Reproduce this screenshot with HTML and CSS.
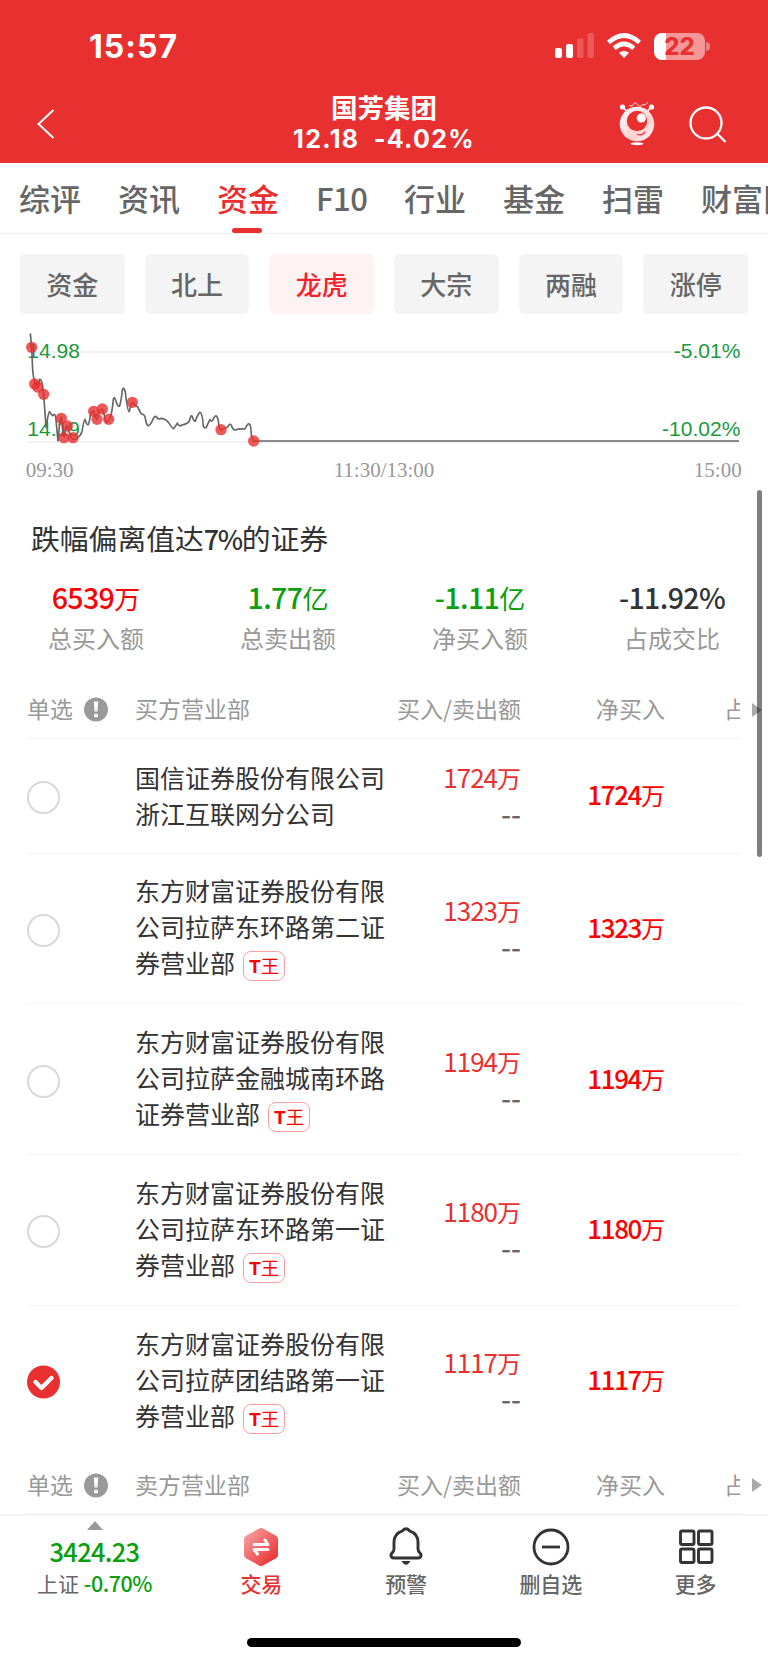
FILE: index.html
```html
<!DOCTYPE html>
<html lang="zh-CN">
<head>
    <meta charset="UTF-8">
    <meta name="viewport" content="width=device-width, initial-scale=1.0">
    <title>国芳集团</title>
    <link rel="stylesheet" href="styles.css">
</head>
<body>
    <header class="header">
        <div class="status-bar">
            <span class="clock">15:57</span>
            <div class="status-icons">
                <svg class="signal" width="40" height="26" viewBox="0 0 40 26" fill="#fff">
                    <rect x="0" y="15" width="7" height="10" rx="2"/>
                    <rect x="11" y="11" width="7" height="14" rx="2"/>
                    <rect x="22" y="5.500" width="6.500" height="19.500" rx="2" opacity=".2"/>
                    <rect x="32.500" y="0" width="6.500" height="25" rx="2" opacity=".2"/>
                </svg>
                <svg class="wifi" width="34" height="26" viewBox="0 0 34 26" fill="none" stroke="#fff" stroke-width="4.600">
                    <path d="M1.500 9.500Q17-4.500 32.500 9.500"/>
                    <path d="M7.200 15.300Q17 6.600 26.800 15.300"/>
                    <path d="M17 25l-5-5.200q5-3.800 10 0z" fill="#fff" stroke="none"/>
                </svg>
                <div class="battery">22</div>
            </div>
        </div>
        <div class="title-bar">
            <svg class="back" width="18" height="30" viewBox="0 0 18 30" fill="none" stroke="#fff" stroke-width="2"><path d="M16.500 1L1.500 15l15 14"/></svg>
            <div class="stock">
                <div class="stock-name">国芳集团</div>
                <div class="stock-price">12.18&nbsp; -4.02%</div>
            </div>
            <svg class="robot" width="36" height="44" viewBox="0 0 36 44">
                <defs>
                    <linearGradient id="ball" x1="0" y1="0" x2="1" y2="1">
                        <stop offset="0" stop-color="#fff"/><stop offset=".65" stop-color="#ffd0d0"/><stop offset="1" stop-color="#fff"/>
                    </linearGradient>
                </defs>
                <path d="M4 5l4 5M32 5l-4 5" stroke="#fff" stroke-width="1.500"/>
                <circle cx="3.500" cy="5" r="2.600" fill="#fff"/>
                <circle cx="32.500" cy="5" r="2.600" fill="#fff"/>
                <path d="M10 3.500l3 .5 3-3.500 5 4 3-2 2 .500 3-3" fill="none" stroke="#ffd0d0" stroke-width="1"/>
                <circle cx="18" cy="22" r="17.300" fill="url(#ball)"/>
                <circle cx="18" cy="19" r="10.200" fill="#e93030"/>
                <circle cx="22.300" cy="16" r="4.600" fill="#fff"/>
                <path d="M18 32.500q6 1.500 8-3" fill="none" stroke="#e93030" stroke-width="1.200"/>
                <ellipse cx="18" cy="41.800" rx="6.500" ry="1.500" fill="#fff"/>
            </svg>
            <svg class="search" width="38" height="38" viewBox="0 0 38 38" fill="none" stroke="#fff" stroke-width="2.300"><circle cx="17" cy="17" r="15.500"/><path d="M28 27.500l8.500 8.500"/></svg>
        </div>
    </header>

    <nav class="tabs">
        <span class="tab">综评</span>
        <span class="tab">资讯</span>
        <span class="tab active">资金</span>
        <span class="tab latin">F10</span>
        <span class="tab">行业</span>
        <span class="tab">基金</span>
        <span class="tab">扫雷</span>
        <span class="tab">财富队</span>
    </nav>

    <div class="chips">
        <span class="chip">资金</span>
        <span class="chip">北上</span>
        <span class="chip active">龙虎</span>
        <span class="chip">大宗</span>
        <span class="chip">两融</span>
        <span class="chip">涨停</span>
    </div>

    <!-- intraday price line, 3 units per pixel -->
    <svg class="chart" width="768" height="160" viewBox="0 270 2304 480">
        <path d="M82 336H2220M82 606H2220" stroke="#eee" stroke-width="5"/>
        <g class="chart-value">
            <text x="82" y="354">14.98</text>
            <text x="82" y="588">14.19</text>
            <text x="2221" y="354" text-anchor="end">-5.01%</text>
            <text x="2221" y="588" text-anchor="end">-10.02%</text>
        </g>
        <path class="chart-line" d="M91 280L95 322L98 390Q101 425 108 432Q115 440 118 420Q121 413 126 428L131 463L138 561Q139 568 142 540Q146 515 149 515Q154 526 158 527Q164 518 167 530L174 604L180 540L184 533L192 592Q197 556 202 558Q208 580 214 594Q222 602 230 594Q242 588 246 575Q252 538 255 538Q260 555 264 555Q268 550 271 525Q276 512 281 514Q287 538 291 538Q298 508 307 507Q315 530 317 544Q322 550 330 535Q336 520 340 478Q343 466 348 484Q353 502 359 498Q364 480 367 450Q371 438 376 456Q382 514 388 515Q393 488 398 487Q406 498 414 502Q420 516 424 522Q434 522 436 535Q440 558 445 557Q454 553 460 535Q466 525 470 532Q476 540 482 535Q497 535 506 548Q517 566 521 566L532 550Q538 562 546 555Q562 552 568 543Q572 524 576 528Q582 546 586 543Q595 520 600 517Q607 520 610 558Q613 567 619 562Q626 545 630 539Q637 548 641 535Q647 524 651 530Q656 539 656 552Q659 575 665 568Q678 565 684 560Q690 548 694 556Q699 571 706 570Q715 566 735 567Q742 550 748 552Q753 555 754 585L761 603H2217"/>
        <g class="chart-dots">
            <circle cx="95" cy="322" r="17"/><circle cx="104" cy="432" r="17"/>
            <circle cx="113" cy="441" r="17"/><circle cx="131" cy="463" r="17"/>
            <circle cx="184" cy="535" r="17"/><circle cx="202" cy="558" r="17"/>
            <circle cx="192" cy="593" r="17"/><circle cx="219" cy="593" r="17"/>
            <circle cx="281" cy="514" r="17"/><circle cx="291" cy="538" r="17"/>
            <circle cx="307" cy="507" r="17"/><circle cx="326" cy="538" r="17"/>
            <circle cx="397" cy="487" r="17"/><circle cx="663" cy="569" r="17"/>
            <circle cx="761" cy="603" r="17"/>
        </g>
        <g class="chart-time">
            <text x="77" y="711">09:30</text>
            <text x="1152" y="711" text-anchor="middle">11:30/13:00</text>
            <text x="2225" y="711" text-anchor="end">15:00</text>
        </g>
    </svg>

    <main class="content">
        <h2 class="reason">跌幅偏离值达<span class="num">7%</span>的证券</h2>

        <div class="stats">
            <div class="stat">
                <div class="stat-value red"><span class="num">6539</span>万</div>
                <div class="stat-label">总买入额</div>
            </div>
            <div class="stat">
                <div class="stat-value green"><span class="num">1.77</span>亿</div>
                <div class="stat-label">总卖出额</div>
            </div>
            <div class="stat">
                <div class="stat-value green"><span class="num">-1.11</span>亿</div>
                <div class="stat-label">净买入额</div>
            </div>
            <div class="stat">
                <div class="stat-value"><span class="num">-11.92%</span></div>
                <div class="stat-label">占成交比</div>
            </div>
        </div>

        <div class="row row-head">
            <div class="pick">单选
                <svg width="24" height="25" viewBox="0 0 24 25"><circle cx="12" cy="12.500" r="12" fill="#999"/><path d="M9.800 4.500h4.400l-.8 10h-2.800z" fill="#fff"/><circle cx="12" cy="18.500" r="2.100" fill="#fff"/></svg>
            </div>
            <div class="dept">买方营业部</div>
            <div class="amount">买入/卖出额</div>
            <div class="net">净买入</div>
            <div class="ratio">占</div>
            <i class="more-arrow"></i>
        </div>
        <div class="row row-short">
            <div class="pick"><i class="radio"></i></div>
            <div class="dept">国信证券股份有限公司<br>浙江互联网分公司</div>
            <div class="amount"><div><span class="num">1724</span>万</div><div class="none">--</div></div>
            <div class="net"><span class="num">1724</span>万</div>
        </div>
        <div class="row">
            <div class="pick"><i class="radio"></i></div>
            <div class="dept">东方财富证券股份有限<br>公司拉萨东环路第二证<br>券营业部<span class="tag"><b>T</b>王</span></div>
            <div class="amount"><div><span class="num">1323</span>万</div><div class="none">--</div></div>
            <div class="net"><span class="num">1323</span>万</div>
        </div>
        <div class="row">
            <div class="pick"><i class="radio"></i></div>
            <div class="dept">东方财富证券股份有限<br>公司拉萨金融城南环路<br>证券营业部<span class="tag"><b>T</b>王</span></div>
            <div class="amount"><div><span class="num">1194</span>万</div><div class="none">--</div></div>
            <div class="net"><span class="num">1194</span>万</div>
        </div>
        <div class="row">
            <div class="pick"><i class="radio"></i></div>
            <div class="dept">东方财富证券股份有限<br>公司拉萨东环路第一证<br>券营业部<span class="tag"><b>T</b>王</span></div>
            <div class="amount"><div><span class="num">1180</span>万</div><div class="none">--</div></div>
            <div class="net"><span class="num">1180</span>万</div>
        </div>
        <div class="row row-last">
            <div class="pick">
                <svg class="checked" width="33" height="34" viewBox="0 0 33 34"><circle cx="16.500" cy="17" r="16.500" fill="#e93030"/><path d="M8.500 17l6 6L24.500 13" fill="none" stroke="#fff" stroke-width="4.400" stroke-linecap="round" stroke-linejoin="round"/></svg>
            </div>
            <div class="dept">东方财富证券股份有限<br>公司拉萨团结路第一证<br>券营业部<span class="tag"><b>T</b>王</span></div>
            <div class="amount"><div><span class="num">1117</span>万</div><div class="none">--</div></div>
            <div class="net"><span class="num">1117</span>万</div>
        </div>
        <div class="row row-head row-sell">
            <div class="pick">单选
                <svg width="24" height="25" viewBox="0 0 24 25"><circle cx="12" cy="12.500" r="12" fill="#999"/><path d="M9.800 4.500h4.400l-.8 10h-2.800z" fill="#fff"/><circle cx="12" cy="18.500" r="2.100" fill="#fff"/></svg>
            </div>
            <div class="dept">卖方营业部</div>
            <div class="amount">买入/卖出额</div>
            <div class="net">净买入</div>
            <div class="ratio">占</div>
            <i class="more-arrow"></i>
        </div>
    </main>
    <div class="scrollbar"></div>

    <footer class="bottom-nav">
        <div class="index">
            <i class="up-arrow"></i>
            <div class="index-value num">3424.23</div>
            <div class="index-change">上证 <span class="num">-0.70%</span></div>
        </div>
        <div class="nav-item active">
            <svg width="36" height="40" viewBox="0 0 36 40">
                <defs><linearGradient id="hex" x1="0" y1="0" x2="1" y2="1"><stop offset="0" stop-color="#f8aaaa"/><stop offset=".9" stop-color="#e93030"/></linearGradient></defs>
                <path d="M16 1.500q2-1 4 0l13 7.300q2 1.200 2 3.200v16q0 2-2 3.200l-13 7.300q-2 1-4 0L3 31.200Q1 30 1 28V12q0-2 2-3.200z" fill="url(#hex)"/>
                <path d="M11 17.500h14l-3-4.500M25 22.500H11l3.500 4.500" fill="none" stroke="#fff" stroke-width="3" stroke-linecap="round" stroke-linejoin="round"/>
            </svg>
            <span>交易</span>
        </div>
        <div class="nav-item">
            <svg width="36" height="40" viewBox="0 0 36 40" fill="none" stroke="#333" stroke-width="2.900">
                <path d="M14.500 3.800q3.500-4 7 0 8.500 3 8.500 11.200V22q0 2.500 2 4 1.800 1.800.5 4-.8 1-2.500 1H6q-1.700 0-2.500-1-1.300-2.200.5-4 2-1.500 2-4v-7q0-8.200 8.500-11.200z" stroke-linejoin="round"/>
                <path d="M13.500 34h9q-4.500 7.500-9 0z" fill="#333" stroke="none"/>
            </svg>
            <span>预警</span>
        </div>
        <div class="nav-item">
            <svg width="38" height="40" viewBox="0 0 38 40" fill="none" stroke="#333" stroke-width="2.800"><circle cx="19" cy="20" r="17"/><path d="M10 20h18"/></svg>
            <span>删自选</span>
        </div>
        <div class="nav-item">
            <svg width="36" height="40" viewBox="0 0 36 40" fill="none" stroke="#333" stroke-width="2.900"><rect x="2.500" y="4" width="13.500" height="13.500" rx="1.500"/><rect x="20.500" y="4" width="13.500" height="13.500" rx="1.500"/><rect x="2.500" y="22" width="13.500" height="13.500" rx="1.500"/><rect x="20.500" y="22" width="13.500" height="13.500" rx="1.500"/></svg>
            <span>更多</span>
        </div>
    </footer>
    <div class="home-bar"></div>
</body>
</html>
```
FILE: styles.css
```css
* {
    box-sizing: border-box;
}

body {
    margin: 0;
    width: 768px;
    height: 1662px;
    overflow: hidden;
    display: flex;
    flex-direction: column;
    position: relative;
    background: #fff;
    color: #333;
    font-family: "Noto Sans CJK SC", sans-serif;
}

svg {
    display: block;
    flex: none;
}

.num {
    font-weight: 500;
    letter-spacing: -0.6px;
}

.red { color: #f00; }
.green { color: #0a9f0f; }

/* header */
.header {
    height: 163px;
    flex: none;
    background: #e93030;
    color: #fff;
}

.status-bar {
    height: 86px;
    padding: 6px 58px 0 89px;
    display: flex;
    align-items: center;
    justify-content: space-between;
}

.clock {
    padding-top: 2px;
    font: 700 32px/40px Inter, sans-serif;
    letter-spacing: 1px;
}

.status-icons {
    display: flex;
    align-items: center;
}

.wifi {
    margin: 0 13px 0 12px;
}

.battery {
    position: relative;
    width: 51px;
    height: 27px;
    margin-right: 5px;
    border-radius: 8px;
    background: linear-gradient(to right, #fff 11.5px, #f69797 11.5px);
    color: #e93030;
    font: 800 24px/27px Inter, sans-serif;
    text-align: center;
}

.battery::after {
    content: "";
    position: absolute;
    left: 52px;
    top: 9px;
    width: 4px;
    height: 9px;
    border-radius: 0 4px 4px 0;
    background: #f27f7f;
}

.title-bar {
    height: 77px;
    padding: 0 41px 0 37px;
    display: flex;
    align-items: center;
}

.stock {
    width: 300px;
    margin: 0 0 5px 179px;
    text-align: center;
    font-weight: 700;
}

.stock-name {
    font-size: 26.5px;
    line-height: 35px;
}

.stock-price {
    font: 700 25px/31px Inter, sans-serif;
    letter-spacing: 1.3px;
}

.back {
    margin-bottom: 2px;
}

.robot {
    margin-left: 85px;
    margin-bottom: 1px;
}

.search {
    margin-left: auto;
}

/* tabs */
.tabs {
    height: 71px;
    flex: none;
    display: flex;
    gap: 37px;
    padding-left: 19px;
    border-bottom: 1px solid #eee;
    overflow: hidden;
}

.tab {
    flex: none;
    position: relative;
    height: 70px;
    color: #666;
    font-size: 31px;
    font-weight: 500;
    line-height: 69px;
}

.tab.latin {
    width: 51px;
    letter-spacing: -0.5px;
}

.tab.active {
    color: #e93030;
}

.tab.active::after {
    content: "";
    position: absolute;
    left: 15px;
    bottom: 0;
    width: 30px;
    height: 5px;
    border-radius: 3px;
    background: #e93030;
}

.chips {
    flex: none;
    display: grid;
    grid-template-columns: repeat(6, 1fr);
    gap: 20px;
    padding: 20px 20px 16px;
}

.chip {
    height: 60px;
    border-radius: 6px;
    background: #f4f4f4;
    color: #666;
    font-size: 26px;
    font-weight: 500;
    line-height: 59px;
    text-align: center;
}

.chip.active {
    background: #fff2f2;
    color: #f5222d;
}

/* chart */
.chart-value {
    font: 63px "Liberation Sans", Arial, sans-serif;
    fill: #1a9a3c;
}

.chart-line {
    fill: none;
    stroke: #666;
    stroke-width: 5;
}

.chart-dots {
    fill: #e93030;
    fill-opacity: 0.8;
}

.chart-time {
    font: 63px "Liberation Serif", serif;
    fill: #999;
}

/* list */
.content {
    height: 1024px;
    flex: none;
    overflow: hidden;
}

.reason {
    margin: 28px 0 0 31px;
    font-size: 28.8px;
    font-weight: 400;
    line-height: 40px;
}

.reason .num {
    font-size: 27px;
    letter-spacing: -1.4px;
}

.stats {
    display: grid;
    grid-template-columns: repeat(4, 1fr);
    padding: 18px 0 25px;
    text-align: center;
}

.stat-value {
    font-size: 26px;
    line-height: 40px;
}

.stat-value .num {
    font-size: 28.5px;
}

.stat-label {
    color: #999;
    font-size: 24px;
    line-height: 36px;
    margin-top: 2px;
}

.row {
    position: relative;
    display: grid;
    grid-template-columns: 108px 259px 127px 144px 75px;
    align-items: center;
    height: 150.7px;
    margin: 0 27px;
    padding-bottom: 2px;
    border-bottom: 1px solid #f5f5f5;
}

.row-head {
    height: 58px;
    padding-bottom: 4px;
    color: #999;
    font-size: 23px;
}

.row-short {
    height: 114.5px;
}

.row-last {
    border-bottom: 0;
}

.row-sell {
    padding-bottom: 2px;
}

.pick {
    display: flex;
    align-items: center;
    gap: 11px;
}

.row-head svg {
    margin-top: 3px;
}

.radio {
    width: 33px;
    height: 33px;
    margin-top: 6px;
    border: 2px solid #d8d8d8;
    border-radius: 50%;
}

.checked {
    margin-top: 5px;
}

.dept {
    font-size: 25px;
    line-height: 36px;
    white-space: nowrap;
}

.amount,
.net {
    font-size: 24px;
    line-height: 36px;
    color: #e93030;
    text-align: right;
    white-space: nowrap;
}

.net {
    color: #f00;
}

.amount .num,
.net .num {
    font-size: 26px;
    letter-spacing: -1px;
}

.net .num {
    letter-spacing: -1.4px;
}

.amount .num {
    font-weight: 400;
}

.amount .none {
    color: #666;
    font-size: 28px;
    font-weight: 500;
    line-height: 34px;
}

.row-head .dept,
.row-head .amount,
.row-head .net {
    color: #999;
    font-size: 23px;
}

.ratio {
    width: 16px;
    margin-left: 59px;
    overflow: hidden;
    white-space: nowrap;
}

.more-arrow {
    position: absolute;
    right: -21px;
    top: 22px;
    border: solid transparent;
    border-width: 7px 0 7px 10px;
    border-left-color: #aaa;
}

.tag {
    display: inline-block;
    height: 30px;
    margin-left: 8px;
    padding: 0 5px;
    border: 1px solid #ffa0a0;
    border-radius: 8px;
    color: #f00;
    font-size: 18.5px;
    line-height: 27px;
    vertical-align: 0;
}

.tag b {
    font: 700 19px/27px Roboto, sans-serif;
}

.dept:has(.tag) {
    height: 108px;
    margin-bottom: 2px;
}

.scrollbar {
    position: absolute;
    left: 757px;
    top: 490px;
    width: 5px;
    height: 367px;
    border-radius: 3px;
    background: rgba(0, 0, 0, 0.5);
}

/* bottom */
.bottom-nav {
    height: 124px;
    flex: none;
    display: grid;
    grid-template-columns: 189px repeat(4, 1fr);
    border-top: 2px solid #f3f3f3;
    background: #fff;
}

.index {
    display: flex;
    flex-direction: column;
    align-items: center;
    padding-top: 5px;
}

.up-arrow {
    border: solid transparent;
    border-width: 0 8px 9px;
    border-bottom-color: #999;
}

.index-value {
    margin-top: 3px;
    color: #0a9f0f;
    font-size: 25.5px;
    line-height: 36px;
    letter-spacing: -0.7px;
}

.index-change {
    color: #666;
    font-size: 21px;
    line-height: 28px;
}

.index-change .num {
    color: #0a9f0f;
    font-size: 21.5px;
    letter-spacing: -0.5px;
}

.nav-item {
    display: flex;
    flex-direction: column;
    align-items: center;
    padding-top: 11px;
    color: #666;
    font-size: 21px;
    font-weight: 500;
    line-height: 33px;
}

.nav-item.active {
    color: #e93030;
}

.home-bar {
    width: 274px;
    height: 9px;
    flex: none;
    margin-left: 247px;
    border-radius: 5px;
    background: #000;
}
```
